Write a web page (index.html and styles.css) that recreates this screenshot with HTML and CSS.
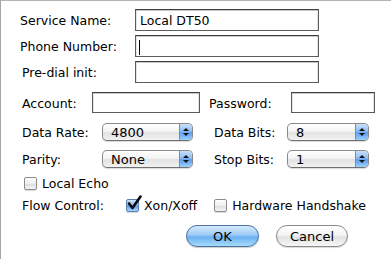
FILE: index.html
```html
<!DOCTYPE html>
<html lang="en">
<head>
    <meta charset="UTF-8">
    <meta name="viewport" content="width=device-width, initial-scale=1.0">
    <title>Modem Settings</title>
    <link rel="stylesheet" href="styles.css">
</head>
<body>
    <div class="window">
        <div class="row row-text first">
            <span class="label label-wide">Service Name:</span>
            <div class="text-field field-wide">Local DT50</div>
        </div>
        <div class="row row-text">
            <span class="label label-wide">Phone Number:</span>
            <div class="text-field field-wide"><span class="caret"></span></div>
        </div>
        <div class="row row-text">
            <span class="label label-wide indent">Pre-dial init:</span>
            <div class="text-field field-wide"></div>
        </div>

        <div class="row row-account">
            <span class="label label-account">Account:</span>
            <div class="text-field field-account"></div>
            <span class="label label-password">Password:</span>
            <div class="text-field field-password"></div>
        </div>

        <div class="row row-popup first-popup">
            <span class="label label-popup">Data Rate:</span>
            <div class="popup popup-left">
                <span class="popup-value">4800</span>
                <span class="popup-arrows"><i class="up"></i><i class="down"></i></span>
            </div>
            <span class="label label-popup-right">Data Bits:</span>
            <div class="popup popup-right">
                <span class="popup-value">8</span>
                <span class="popup-arrows"><i class="up"></i><i class="down"></i></span>
            </div>
        </div>
        <div class="row row-popup">
            <span class="label label-popup">Parity:</span>
            <div class="popup popup-left">
                <span class="popup-value">None</span>
                <span class="popup-arrows"><i class="up"></i><i class="down"></i></span>
            </div>
            <span class="label label-popup-right">Stop Bits:</span>
            <div class="popup popup-right">
                <span class="popup-value">1</span>
                <span class="popup-arrows"><i class="up"></i><i class="down"></i></span>
            </div>
        </div>

        <div class="row row-check echo">
            <span class="checkbox"></span>
            <span class="check-text">Local Echo</span>
        </div>

        <div class="row row-check flow">
            <span class="label label-flow">Flow Control:</span>
            <span class="checkbox checked">
                <svg width="17" height="17" viewBox="0 0 17 17"><path d="M3 8.5 L6.5 13 L14.5 1.5" fill="none" stroke="#0a0a0a" stroke-width="2.6" stroke-linecap="round" stroke-linejoin="round"/></svg>
            </span>
            <span class="check-text">Xon/Xoff</span>
            <span class="checkbox hw"></span>
            <span class="check-text">Hardware Handshake</span>
        </div>

        <div class="row buttons">
            <button class="btn btn-default">OK</button>
            <button class="btn btn-cancel">Cancel</button>
        </div>
    </div>
</body>
</html>
```

FILE: styles.css
```css
html, body {
    margin: 0;
    padding: 0;
    background-color: #fff;
}
body {
    font-family: "DejaVu Sans", sans-serif;
    font-size: 12.5px;
    color: #000;
}
.window {
    width: 390px;
    height: 258px;
    border-top: 1px solid #b4b4b4;
    border-left: 1px solid #a6a6a6;
}
.row {
    display: flex;
    align-items: center;
    padding-left: 19px;
}
.label {
    flex: none;
    white-space: nowrap;
    padding-top: 1px;
}

/* text fields */
.row-text {
    height: 22px;
    margin-top: 4px;
}
.row-text.first {
    margin-top: 8px;
}
.label-wide {
    width: 115px;
}
.indent {
    padding-left: 2px;
    width: 113px;
}
.text-field {
    height: 100%;
    box-sizing: border-box;
    border: 1px solid #5c5c5c;
    border-top-color: #3e3e3e;
    box-shadow: inset 0 1px 0 #c8c8c8, inset 1px 0 0 #e4e4e4, inset -1px 0 0 #e4e4e4;
    background: #fff;
    padding: 2px 0 0 4px;
    display: flex;
    align-items: center;
    line-height: 1;
}
.field-wide {
    width: 184px;
}
.caret {
    display: block;
    width: 1px;
    height: 15px;
    margin-left: -1px;
    background: #000;
}

.row-account {
    height: 21px;
    margin-top: 9px;
    padding-left: 21px;
}
.label-account {
    width: 70px;
}
.field-account {
    width: 108px;
}
.label-password {
    margin-left: 9px;
    width: 82px;
}
.field-password {
    width: 84px;
}

/* pop-up menus */
.row-popup {
    height: 18px;
    margin-top: 9px;
    padding-left: 21px;
}
.row-popup.first-popup {
    margin-top: 10px;
}
.label-popup {
    width: 80px;
}
.label-popup-right {
    margin-left: 21px;
    width: 73px;
}
.popup {
    height: 18px;
    box-sizing: border-box;
    display: flex;
    border: 1px solid #8a8a8a;
    border-bottom-color: #707070;
    border-radius: 5px;
    background: linear-gradient(#ffffff 0%, #f4f4f4 45%, #e2e2e2 55%, #f2f2f2 100%);
    box-shadow: 0 1px 1px rgba(0, 0, 0, 0.15);
    overflow: hidden;
}
.popup-left {
    width: 91px;
}
.popup-right {
    width: 82px;
}
.popup-value {
    flex: 1;
    padding-left: 8px;
    line-height: 17px;
    font-size: 13px;
}
.popup-arrows {
    width: 12px;
    border-left: 1px solid #6b8fc0;
    background: linear-gradient(#c9e0fb 0%, #8dbef3 45%, #5e9df0 55%, #9ed0fb 100%);
    display: flex;
    flex-direction: column;
    align-items: center;
    justify-content: center;
    gap: 2px;
}
.popup-arrows i {
    display: block;
    width: 0;
    height: 0;
    border-left: 3px solid transparent;
    border-right: 3px solid transparent;
}
.popup-arrows .up {
    border-bottom: 3px solid #111;
}
.popup-arrows .down {
    border-top: 3px solid #111;
}

/* checkboxes */
.row-check {
    height: 14px;
    margin-top: 8px;
}
.echo {
    padding-left: 23px;
}
.flow {
    padding-left: 21px;
}
.label-flow {
    width: 104px;
}
.checkbox {
    position: relative;
    flex: none;
    width: 13px;
    height: 13px;
    box-sizing: border-box;
    border: 1px solid #8c8c8c;
    border-radius: 2px;
    background: linear-gradient(#ffffff, #ededed 50%, #dedede 55%, #f4f4f4);
    box-shadow: 0 1px 1px rgba(0, 0, 0, 0.15);
}
.checkbox.checked {
    border-color: #5a7fb3;
    background: linear-gradient(#cfe3fb 0%, #8fbef3 45%, #5f9ff0 55%, #a5d3fb 100%);
}
.checkbox svg {
    position: absolute;
    left: -1px;
    top: -5px;
}
.check-text {
    margin-left: 5px;
    white-space: nowrap;
    padding-top: 1px;
}
.checkbox.hw {
    margin-left: 17px;
}

/* buttons */
.buttons {
    margin-top: 13px;
    padding-left: 185px;
}
.btn {
    font-family: inherit;
    font-size: 13px;
    height: 22px;
    border-radius: 11px;
    padding: 0;
    color: #000;
    cursor: pointer;
}
.btn-default {
    width: 73px;
    border: 1px solid #4a6fa5;
    background: linear-gradient(#d6eafd 0%, #9ccbf6 45%, #6cb0f1 55%, #a6dcfc 100%);
    box-shadow: 0 1px 1px rgba(0, 0, 0, 0.2);
}
.btn-cancel {
    width: 72px;
    margin-left: 17px;
    border: 1px solid #8a8a8a;
    background: linear-gradient(#ffffff 0%, #f4f4f4 45%, #e2e2e2 55%, #f6f6f6 100%);
    box-shadow: 0 1px 1px rgba(0, 0, 0, 0.15);
}
```
